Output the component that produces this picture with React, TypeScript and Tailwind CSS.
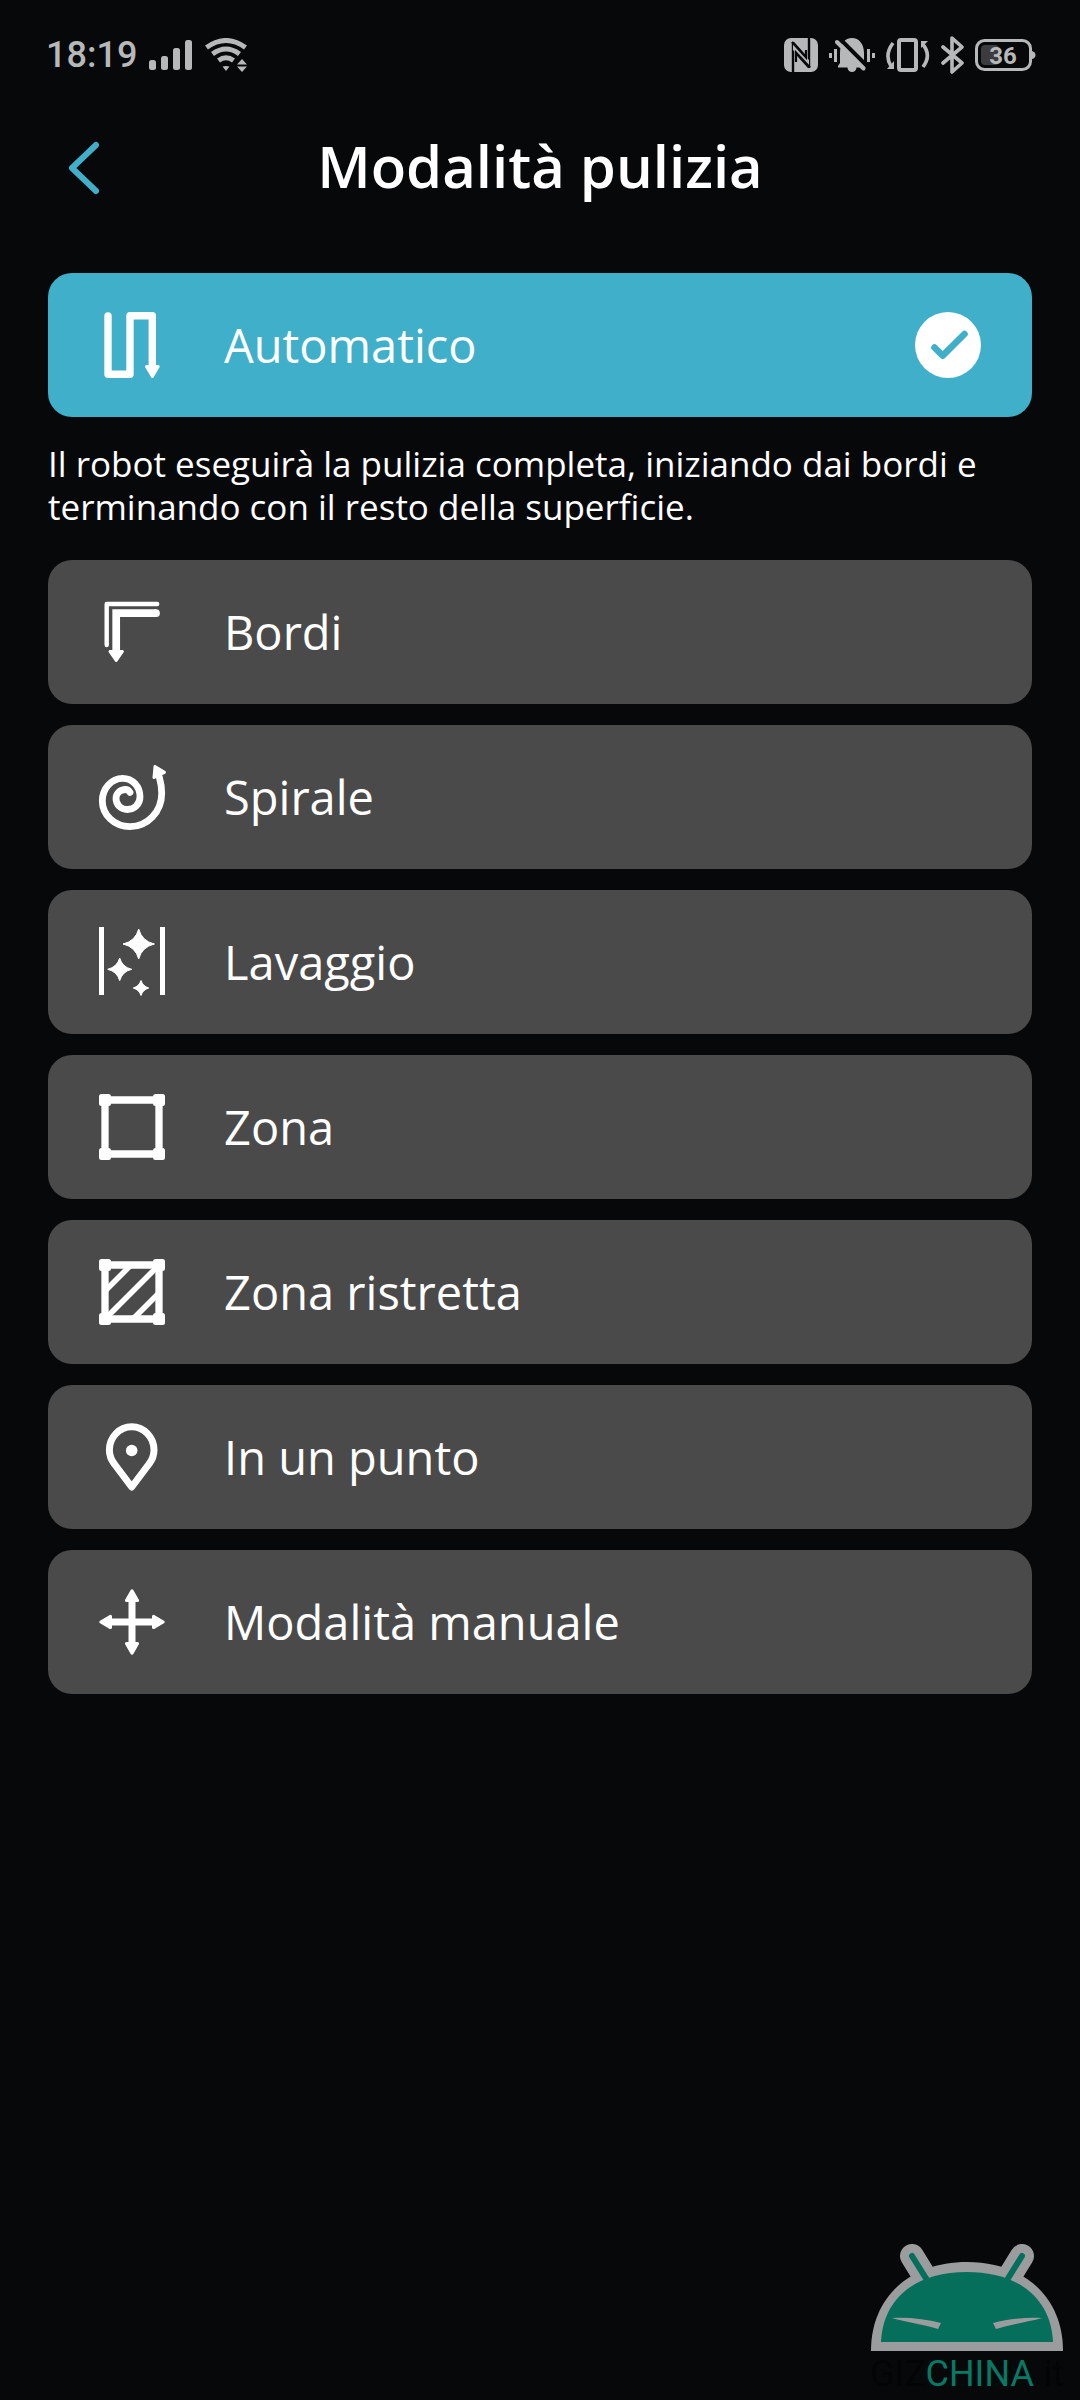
import React, { useState } from 'react';

type IconProps = { children: React.ReactNode };

const ModeIcon: React.FC<IconProps> = ({ children }) => (
  <svg viewBox="0 0 66 66" className="size-[66px] shrink-0 overflow-visible" fill="none" stroke="white" strokeLinejoin="round" aria-hidden="true">
    {children}
  </svg>
);

const AutoIcon = () => (
  <ModeIcon>
    <path d="M9 4V62.3H31V3.7H53.3V55" strokeWidth="7.4" strokeLinecap="round" />
    <path d="M47.5 54.5H59.2L53.4 64.5Z" fill="white" strokeWidth="3" />
  </ModeIcon>
);

const EdgesIcon = () => (
  <ModeIcon>
    <path d="M7.7 46V5H58.2" strokeWidth="4.4" strokeLinecap="round" />
    <path d="M17.2 52V14.2H57" strokeWidth="7.7" strokeLinejoin="miter" />
    <circle cx="57" cy="14.2" r="3.85" fill="white" stroke="none" />
    <path d="M11 52.5H23.4L17.2 61.5Z" fill="white" strokeWidth="3" />
  </ModeIcon>
);

const SpiralIcon = () => (
  <ModeIcon>
    <path
      d="M31 28.4C29.6 26.2 28.2 25.5 26.5 25.5C21 25.5 17 29.5 17 34.6C17 40.8 22 45.5 28.3 45.5C35.5 45.5 41 40 41 32.7C41 22.5 33.5 14.3 23.7 14.3C12.5 14.3 3.3 24.5 3.3 36.7C3.3 51 15.5 62.7 31 62.7C48.5 62.7 62.7 47.7 62.7 29.3C62.7 24 62 19 60.3 13"
      strokeWidth="6.8"
      strokeLinecap="round"
    />
    <path d="M56 2.5L65.5 8.3L55 13.5Z" fill="white" strokeWidth="3" />
  </ModeIcon>
);

const WashIcon = () => (
  <ModeIcon>
    <path d="M2.5 -2V66M63.5 -2V66" strokeWidth="5" />
    <g fill="white">
      <path d="M39.7 0Q42.8 12 55.4 15Q42.8 18 39.7 30Q36.6 18 24 15Q36.6 12 39.7 0Z" />
      <path d="M20.7 29Q23.2 38 32.7 40.3Q23.2 42.6 20.7 51.6Q18.2 42.6 8.7 40.3Q18.2 38 20.7 29Z" />
      <path d="M42 51.5Q43.8 57.2 49.7 59Q43.8 60.8 42 66.5Q40.2 60.8 34.3 59Q40.2 57.2 42 51.5Z" />
    </g>
  </ModeIcon>
);

const ZoneFrame = () => (
  <>
    <rect x="6" y="6" width="54" height="54" strokeWidth="7.3" />
    <g fill="white" stroke="none">
      <rect x="0" y="0" width="12" height="12" rx="2.5" />
      <rect x="54" y="0" width="12" height="12" rx="2.5" />
      <rect x="0" y="54" width="12" height="12" rx="2.5" />
      <rect x="54" y="54" width="12" height="12" rx="2.5" />
    </g>
  </>
);

const ZoneIcon = () => (
  <ModeIcon>
    <ZoneFrame />
  </ModeIcon>
);

const RestrictedIcon = () => (
  <ModeIcon>
    <ZoneFrame />
    <path d="M7 31L32 6M6 60L60 6M34 60L60 34" strokeWidth="5.6" />
  </ModeIcon>
);

const SpotIcon = () => (
  <ModeIcon>
    <path d="M32.7 63L15.4 40C12.2 36 10.4 31 10.4 26A22.3 23.2 0 0 1 55 26C55 31 53.2 36 50 40Z" strokeWidth="7" />
    <circle cx="32.7" cy="26.5" r="5.8" fill="white" stroke="none" />
  </ModeIcon>
);

const ManualIcon = () => (
  <ModeIcon>
    <path d="M33 8V58M8 33H58" strokeWidth="7" />
    <g fill="white" strokeWidth="3">
      <path d="M33 1.8L27.4 11.5H38.6Z" />
      <path d="M33 64.2L27.4 54.5H38.6Z" />
      <path d="M1.8 33L11.5 27.4V38.6Z" />
      <path d="M64.2 33L54.5 27.4V38.6Z" />
    </g>
  </ModeIcon>
);

const modes = [
  {
    id: 'auto',
    label: 'Automatico',
    icon: AutoIcon,
    description: 'Il robot eseguirà la pulizia completa, iniziando dai bordi e terminando con il resto della superficie.',
  },
  { id: 'edges', label: 'Bordi', icon: EdgesIcon },
  { id: 'spiral', label: 'Spirale', icon: SpiralIcon },
  { id: 'wash', label: 'Lavaggio', icon: WashIcon },
  { id: 'zone', label: 'Zona', icon: ZoneIcon },
  { id: 'restricted', label: 'Zona ristretta', icon: RestrictedIcon },
  { id: 'spot', label: 'In un punto', icon: SpotIcon },
  { id: 'manual', label: 'Modalità manuale', icon: ManualIcon },
];

const StatusBar = () => (
  <div className="flex h-[110px] items-center justify-between pr-11 pl-[46px] font-['Roboto',sans-serif] text-[#b7b8b9]">
    <div className="flex items-center gap-3">
      <span className="text-[36px] leading-none font-medium">18:19</span>
      <svg width="44" height="32" viewBox="0 0 44 32" fill="currentColor" aria-hidden="true">
        <rect x="0" y="21" width="7" height="10" rx="2.5" />
        <rect x="12" y="17" width="7" height="14" rx="2.5" />
        <rect x="24" y="9" width="7" height="22" rx="2.5" />
        <rect x="36" y="1" width="7" height="30" rx="2.5" />
      </svg>
      <svg width="43" height="34" viewBox="0 0 43 34" fill="none" stroke="currentColor" strokeWidth="5" aria-hidden="true">
        <path d="M1.5 9.5Q21 -4.5 40.5 9.5" />
        <path d="M7.5 16Q21 6 34.5 16" />
        <path d="M13.5 22.5Q21 17 28.5 22.5" />
        <path d="M17.5 28.5Q21 27.5 24.5 28.5L21 33Z" fill="currentColor" stroke="none" />
        <path d="M37 21L42 26.5H32ZM32 28.5H42L37 34Z" fill="currentColor" stroke="none" />
      </svg>
    </div>
    <div className="flex items-center gap-[11px]">
      <svg width="34" height="34" viewBox="0 0 34 34" aria-hidden="true">
        <rect width="34" height="34" rx="7" fill="currentColor" />
        <path d="M9 4.5L22 19M25 29.5L12 15M9 4V34M25 0V30" fill="none" stroke="#07080a" strokeWidth="2.4" />
        <path d="M9 4.5L25 22V29.5L9 12Z" fill="currentColor" />
        <path d="M8 4L22 19.5V12M26 29.5L12 14.5V24" fill="none" stroke="#07080a" strokeWidth="2.2" />
      </svg>
      <svg width="46" height="36" viewBox="0 0 46 36" fill="currentColor" aria-hidden="true">
        <path d="M9 29L11 26V16C11 7 16 1 23 1S35 7 35 16V26L37 29V30.5H27.5A4.5 4.5 0 0 1 18.5 30.5H9Z" />
        <path d="M12 3L38 29" stroke="#07080a" strokeWidth="4" />
        <path d="M8 5L34.5 31.5" stroke="currentColor" strokeWidth="4" strokeLinecap="round" />
        <path d="M1.5 16V21M6.5 12V25M39.5 12V25M44.5 16V21" stroke="currentColor" strokeWidth="3" />
      </svg>
      <svg width="44" height="36" viewBox="0 0 44 36" fill="none" stroke="currentColor" strokeWidth="4" aria-hidden="true">
        <rect x="13" y="3" width="17" height="30" rx="2" />
        <path d="M7 6Q-2 18 5 29M36.5 7Q46 18 37 30" strokeWidth="3.6" />
        <path d="M8 24V32H1ZM35 4H42L35 11Z" fill="currentColor" stroke="none" />
      </svg>
      <svg width="23" height="38" viewBox="0 0 23 38" fill="none" stroke="currentColor" strokeWidth="3.6" strokeLinejoin="round" aria-hidden="true">
        <path d="M2 11L21 27L11 36V2L21 11L2 27" strokeLinecap="round" />
      </svg>
      <svg width="61" height="34" viewBox="0 0 61 34" role="img" aria-label="Batteria 36%">
        <rect x="1.5" y="2.5" width="54" height="29" rx="8" fill="none" stroke="currentColor" strokeWidth="3" />
        <path d="M57 13Q60.5 14 60.5 17T57 21Z" fill="currentColor" />
        <rect x="6" y="7" width="18" height="20" rx="4" fill="#3b3c3d" />
        <text x="28" y="25.5" textAnchor="middle" fill="currentColor" className="text-[24px] font-bold">36</text>
      </svg>
    </div>
  </div>
);

const Watermark = () => (
  <div className="flex w-[194px] flex-col items-center">
    <svg viewBox="0 0 194 108" className="w-full" aria-hidden="true">
      <path d="M42 12L58 38M152 12L136 38" stroke="#9b9c9d" strokeWidth="24" strokeLinecap="round" />
      <path d="M1 107C1 53 40 18 97 18S193 53 193 107Z" fill="#9b9c9d" />
      <path d="M42 12L62 44M152 12L132 44" stroke="#056f5c" strokeWidth="6" strokeLinecap="round" />
      <path d="M11 98C13 54 46 28 97 28S181 54 183 98Z" fill="#056f5c" />
      <path d="M22 74C38 73 56 75 71 79L68 85C52 80 36 78 22 74ZM172 74C156 73 138 75 123 79L126 85C142 80 158 78 172 74Z" fill="#9b9c9d" />
    </svg>
    <p className="font-['Roboto',sans-serif] text-[36px] leading-[44px] whitespace-nowrap text-[#030405]">
      GIZ<span className="text-[#067a64]">CHINA</span>.it
    </p>
  </div>
);

const App: React.FC = () => {
  const [selected, setSelected] = useState('auto');

  return (
    <div className="flex min-h-screen flex-col bg-[#07080a] font-['Open_Sans',sans-serif] text-white">
      <StatusBar />

      <header className="grid h-[115px] grid-cols-[72px_1fr_72px] items-center px-12">
        <button type="button" aria-label="Indietro" className="flex h-[72px] items-center justify-center">
          <svg width="32" height="54" viewBox="0 0 32 54" fill="none" stroke="#41afc9" strokeWidth="6" strokeLinecap="round" strokeLinejoin="round">
            <path d="M28 4L4 27L28 50" />
          </svg>
        </button>
        <h1 className="pb-1 text-center text-[58px] leading-[72px] font-semibold">Modalità pulizia</h1>
      </header>

      <main className="flex flex-col gap-[21px] px-12 pt-12">
        {modes.map((mode) => {
          const Icon = mode.icon;
          const active = mode.id === selected;
          return (
            <div key={mode.id}>
              <button
                type="button"
                aria-pressed={active}
                onClick={() => setSelected(mode.id)}
                className={`flex h-36 w-full items-center rounded-3xl px-[51px] text-left ${active ? 'bg-[#40afc9]' : 'bg-[#4a4a4a]'}`}
              >
                <Icon />
                <span className="ml-[59px] flex-1 text-[47px] leading-[60px]">{mode.label}</span>
                {active && (
                  <svg viewBox="0 0 66 66" className="size-[66px]" fill="none" aria-hidden="true">
                    <circle cx="33" cy="33" r="33" fill="white" />
                    <path d="M19.5 35.5L27.7 43.7L49.5 22" stroke="#40afc9" strokeWidth="6.6" strokeLinecap="round" strokeLinejoin="round" />
                  </svg>
                )}
              </button>
              {active && mode.description && <p className="pt-[25px] pb-[11px] text-[35px] leading-[43px]">{mode.description}</p>}
            </div>
          );
        })}
      </main>

      <footer className="mt-auto flex justify-end pr-4 pb-1">
        <Watermark />
      </footer>
    </div>
  );
};

export default App;
